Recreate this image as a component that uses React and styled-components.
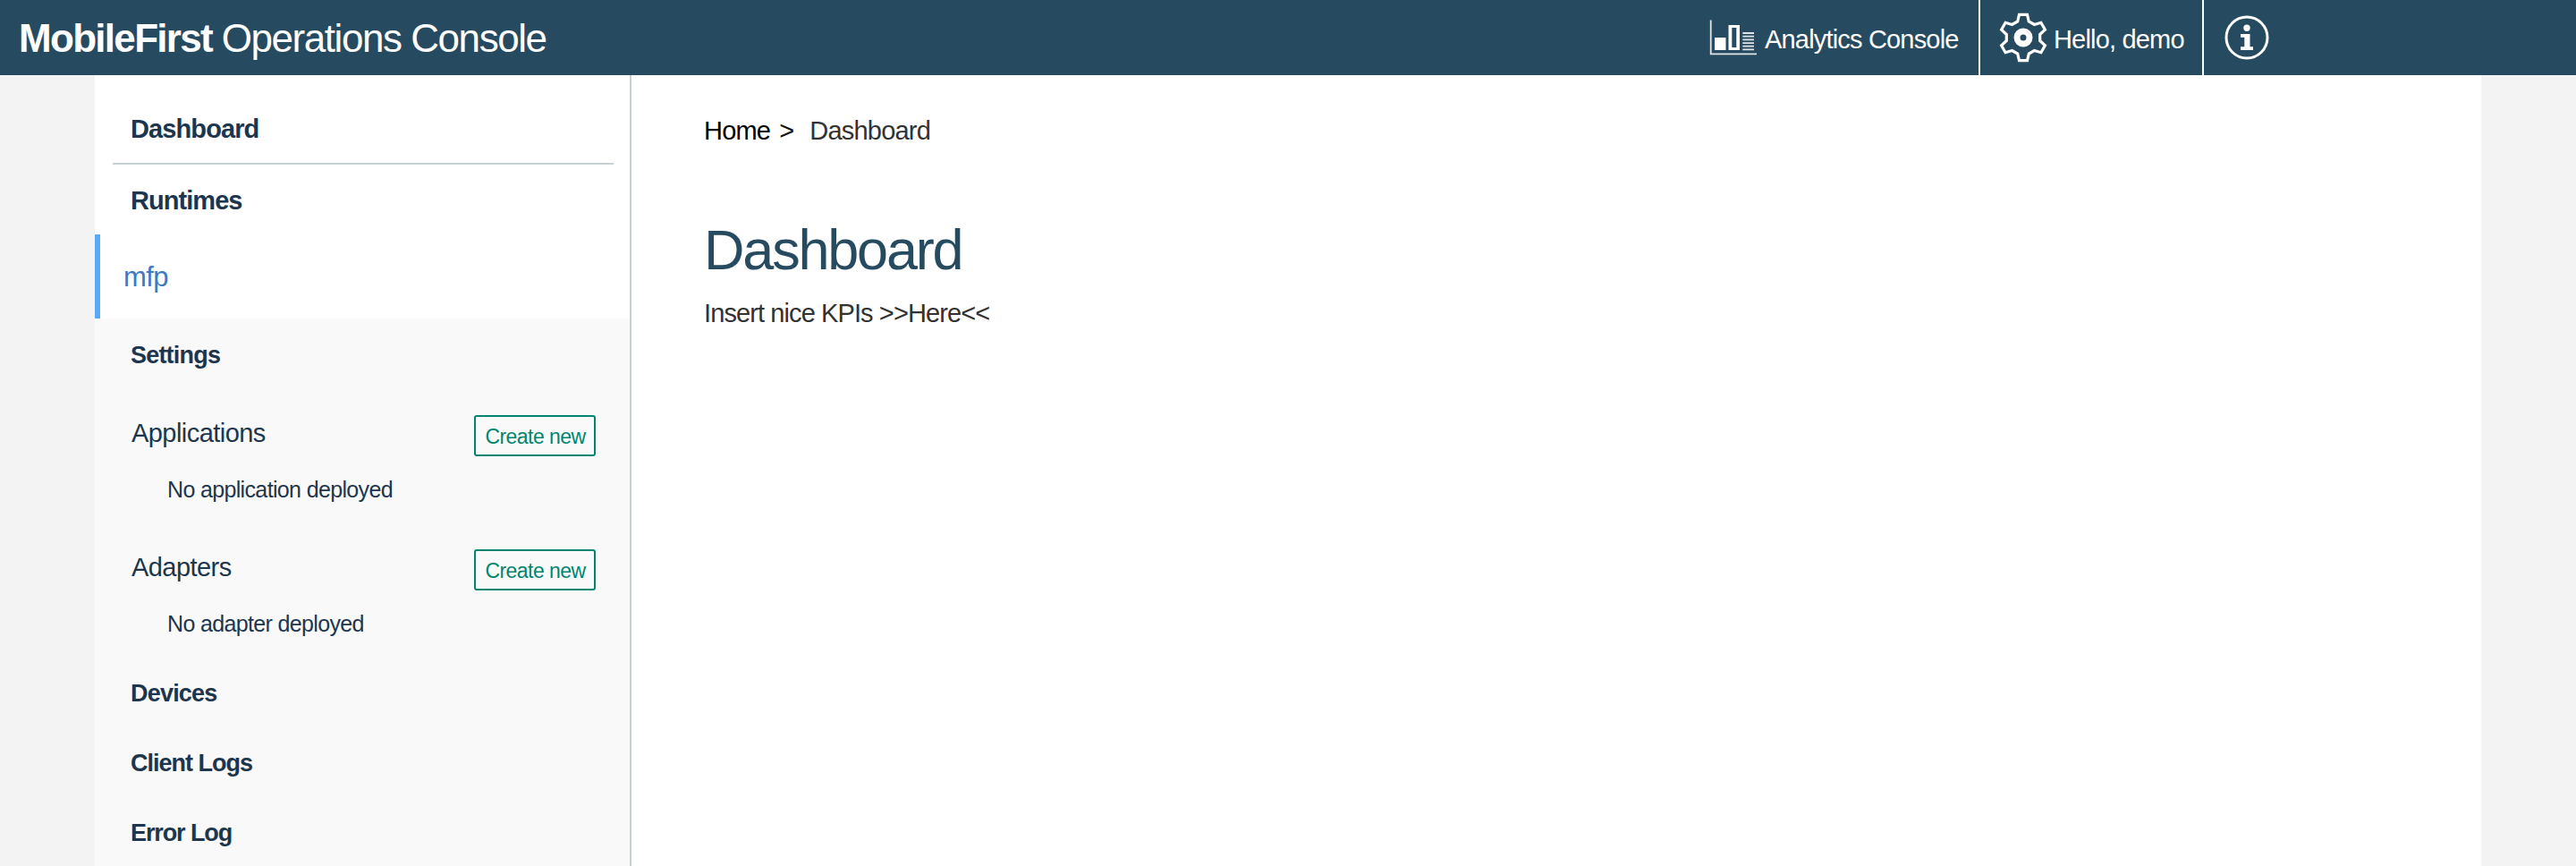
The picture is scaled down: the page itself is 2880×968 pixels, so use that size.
import React from "react";
import styled, { createGlobalStyle } from "styled-components";

const Global = createGlobalStyle`
  *, *::before, *::after { box-sizing: border-box; }
  html, body { margin: 0; padding: 0; }
  body {
    background: #f3f3f3;
    font-family: "Liberation Sans", Arial, sans-serif;
    font-size: 29px;
    letter-spacing: -0.55px;
    overflow: hidden;
  }
`;

const Page = styled.div`
  display: flex;
  flex-direction: column;
  width: 2880px;
  height: 968px;
  overflow: hidden;
`;

const Header = styled.header`
  display: flex;
  flex: none;
  height: 84px;
  padding-right: 320px;
  background: #264a60;
  color: #fff;
`;

const Brand = styled.div`
  flex: 1;
  padding-left: 21px;
  font-size: 44px;
  line-height: 86px;
  letter-spacing: -1.45px;
  white-space: nowrap;

  b {
    letter-spacing: -1.7px;
  }
`;

const HeaderItem = styled.div`
  display: flex;
  align-items: center;
  width: ${(p) => p.$width}px;
  padding-left: ${(p) => p.$pad}px;
  border-left: ${(p) => (p.$divided ? "2px solid #fff" : "0")};
  letter-spacing: -0.82px;
  white-space: nowrap;
`;

const HeaderLabel = styled.span`
  margin-left: ${(p) => p.$gap}px;
  line-height: 32px;
  padding-top: 4px;
`;

const Icon = styled.svg`
  display: block;
  flex: none;
`;

const Body = styled.div`
  display: flex;
  flex: 1;
  min-height: 0;
  margin: 0 106px;
  background: #fff;
`;

const Sidebar = styled.nav`
  width: 600px;
  flex: none;
  border-right: 2px solid #c7d1d1;
  color: #1d364d;
  white-space: nowrap;
  overflow: hidden;
`;

const Section = styled.div`
  display: flex;
  align-items: center;
  height: ${(p) => p.$height}px;
  margin: 0 18px 0 20px;
  padding: ${(p) => p.$top}px 0 0 20px;
  border-bottom: ${(p) => (p.$ruled ? "2px solid #c7d1d1" : "0")};
  font-weight: bold;
  letter-spacing: ${(p) => p.$track}px;
`;

const Runtime = styled.div`
  display: flex;
  align-items: center;
  height: 94px;
  padding: 2px 0 0 26px;
  border-left: 6px solid #5aaafa;
  color: #4178be;
  font-size: 31px;
`;

const RuntimeMenu = styled.div`
  background: #f9f9f9;
  height: 620px;
`;

const MenuLink = styled.div`
  height: ${(p) => p.$height}px;
  line-height: ${(p) => p.$height}px;
  padding-left: 40px;
  font-size: 27px;
  font-weight: bold;
  letter-spacing: ${(p) => p.$track}px;
`;

const Group = styled.div`
  height: ${(p) => p.$height}px;
`;

const GroupHead = styled.div`
  display: flex;
  align-items: center;
  justify-content: space-between;
  height: 92px;
  padding: 0 38px 0 41px;
`;

const CreateButton = styled.button`
  width: 136px;
  height: 46px;
  margin-top: 6px;
  padding: 3px 0 0 1px;
  border: 2px solid #008571;
  border-radius: 3px;
  background: transparent;
  color: #008571;
  font: 23px "Liberation Sans", Arial, sans-serif;
  letter-spacing: -0.55px;
  white-space: nowrap;
`;

const EmptyNote = styled.div`
  padding-left: 81px;
  font-size: 25px;
  line-height: 35px;
  letter-spacing: -0.65px;
`;

const Main = styled.main`
  flex: 1;
  padding: 42px 0 0 81px;
  color: #323232;
`;

const Breadcrumb = styled.div`
  display: flex;
  line-height: 40px;
  letter-spacing: -0.8px;
`;

const CrumbHome = styled.span`
  color: #000;
`;

const CrumbSeparator = styled.span`
  color: #121212;
  margin: 0 18px 0 10px;
`;

const Title = styled.h1`
  margin: 79px 0 0;
  color: #264a60;
  font-size: 63px;
  font-weight: normal;
  line-height: 68px;
  letter-spacing: -2.2px;
`;

const Text = styled.p`
  margin: 17px 0 0;
  line-height: 40px;
  letter-spacing: -0.9px;
`;

const AnalyticsIcon = () => (
  <Icon width="54" height="42" viewBox="0 0 54 42">
    <path d="M1.7 1.500v37.800H53" fill="none" stroke="#dfe5e8" strokeWidth="1.800" />
    <path d="M6 21h12.500v14H6z" fill="#fff" />
    <path
      d="M21.500 7H34v28H21.500zM25.300 10v22h5V10z"
      fill="#fff"
      fillRule="evenodd"
    />
    <path
      d="M37.300 16H50M37.300 19.700H50M37.300 23.400H50M37.300 27.100H50M37.300 30.700H50M37.300 34.300H50"
      stroke="#dfe5e8"
      strokeWidth="1.800"
    />
  </Icon>
);

const GearIcon = () => (
  <Icon width="54" height="56" viewBox="-27 -28 54 56">
    <path
      d="M-4.500-25.600H4.500L6.300-18 12.400-14.500 19.900-16.700 24.400-8.900 18.700-3.500V3.500L24.400 8.900 19.900 16.700 12.400 14.500 6.300 18 4.500 25.600H-4.500L-6.300 18-12.400 14.500-19.900 16.700-24.400 8.900-18.700 3.500V-3.500L-24.400-8.900-19.900-16.700-12.400-14.500-6.300-18z"
      fill="none"
      stroke="#fff"
      strokeWidth="3.200"
    />
    <circle r="7" fill="none" stroke="#fff" strokeWidth="7" />
  </Icon>
);

const InfoIcon = () => (
  <Icon width="50" height="50" viewBox="0 0 50 50">
    <circle cx="25" cy="25" r="23" fill="none" stroke="#fff" strokeWidth="3" />
    <circle cx="25" cy="14.300" r="3.700" fill="#fff" />
    <path d="M18 21h10.500v14.300H32V39H18v-3.700h4.300V24.700H18z" fill="#fff" />
  </Icon>
);

export default function App() {
  return (
    <Page>
      <Global />
      <Header>
        <Brand>
          <b>MobileFirst</b> Operations Console
        </Brand>
        <HeaderItem $width={302} $pad={1}>
          <AnalyticsIcon />
          <HeaderLabel $gap={8}>Analytics Console</HeaderLabel>
        </HeaderItem>
        <HeaderItem $width={250} $pad={21} $divided>
          <GearIcon />
          <HeaderLabel $gap={7}>Hello, demo</HeaderLabel>
        </HeaderItem>
        <HeaderItem $width={98} $pad={23} $divided>
          <InfoIcon />
        </HeaderItem>
      </Header>
      <Body>
        <Sidebar>
          <Section $height={100} $top={22} $ruled $track={-0.9}>Dashboard</Section>
          <Section $height={78} $top={3} $track={-0.95}>Runtimes</Section>
          <Runtime>mfp</Runtime>
          <RuntimeMenu>
            <MenuLink $height={82} $track={-0.8}>Settings</MenuLink>
            <Group $height={150}>
              <GroupHead>
                Applications
                <CreateButton>Create new</CreateButton>
              </GroupHead>
              <EmptyNote>No application deployed</EmptyNote>
            </Group>
            <Group $height={148}>
              <GroupHead>
                Adapters
                <CreateButton>Create new</CreateButton>
              </GroupHead>
              <EmptyNote>No adapter deployed</EmptyNote>
            </Group>
            <MenuLink $height={78} $track={-0.8}>Devices</MenuLink>
            <MenuLink $height={78} $track={-1}>Client Logs</MenuLink>
            <MenuLink $height={78} $track={-1.1}>Error Log</MenuLink>
          </RuntimeMenu>
        </Sidebar>
        <Main>
          <Breadcrumb>
            <CrumbHome>Home</CrumbHome>
            <CrumbSeparator>&gt;</CrumbSeparator>
            <span>Dashboard</span>
          </Breadcrumb>
          <Title>Dashboard</Title>
          <Text>Insert nice KPIs &gt;&gt;Here&lt;&lt;</Text>
        </Main>
      </Body>
    </Page>
  );
}
